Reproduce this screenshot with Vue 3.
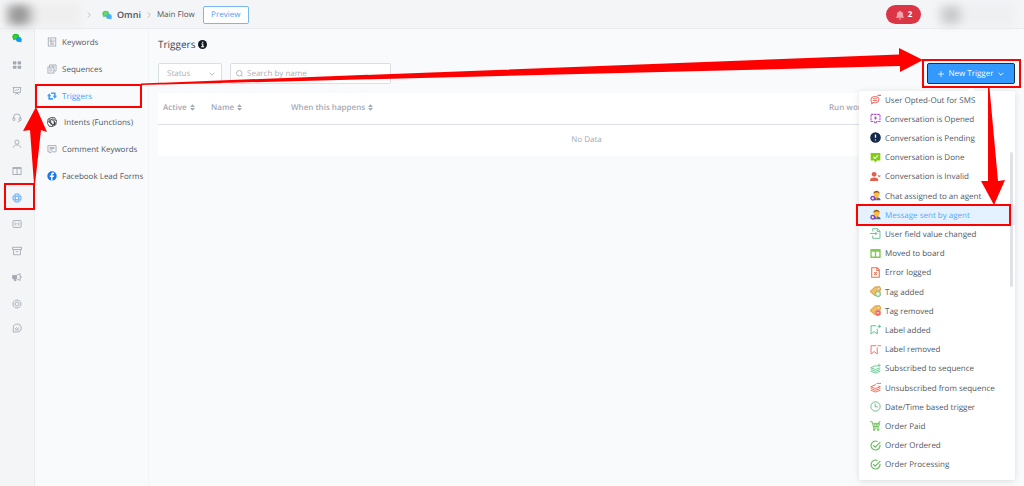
<script setup>
import { ref } from 'vue'

const status = ref('')
const query = ref('')

const chat = '<ellipse cx="6" cy="6" rx="5.5" ry="4.8" fill="#22c32e" stroke="none"/><path d="M2 9v3l3-2z" fill="#22c32e" stroke="none"/><ellipse cx="11" cy="10.5" rx="4.5" ry="4" fill="#1696f0" stroke="none"/><path d="M12 13l3 2.5v-4z" fill="#1696f0" stroke="none"/><path d="M3.5 5h5M3.5 7h4" stroke="#7be082" stroke-width=".8"/>'

const icons = {
  chat,
  grid: '<g fill="currentColor" stroke="none"><rect x="1.5" y="2" width="5.5" height="5" rx="1"/><rect x="9" y="2" width="5.5" height="5" rx="1"/><rect x="1.5" y="9" width="5.5" height="5" rx="1"/><rect x="9" y="9" width="5.5" height="5" rx="1"/></g>',
  board: '<path d="M1 2.500h14M2.500 2.500v8h11v-8M5 14l3-3 3 3M5 8l2-2 1.500 1L11 5"/>',
  headset: '<path d="M2.500 9V7a5.500 5.500 0 0 1 11 0v2M13 11c0 2-1.500 3-4 3"/><rect x="1.500" y="7.500" width="3" height="4.500" rx="1"/><rect x="11.500" y="7.500" width="3" height="4.500" rx="1"/>',
  user: '<circle cx="8" cy="5" r="3.300"/><path d="M2 14c.5-3.500 3-4.500 6-4.500s5.500 1 6 4.500"/>',
  columns: '<rect x="1.500" y="2.500" width="13" height="11"/><path d="M8 2.500v11M1.500 4h13"/>',
  life: '<circle cx="8" cy="8" r="6.600"/><circle cx="8" cy="8" r="3"/><path d="M6 2v3.500M10 2v3.500M6 10.500V14M10 10.500V14M2 6h3.500M2 10h3.500M10.500 6H14M10.500 10H14"/>',
  counter: '<rect x="1.500" y="2.500" width="13" height="11" rx="1"/><path d="M5 5.500v5M11 5.500v5M8 6.500V8M8 9v1"/>',
  archive: '<rect x="1" y="2" width="14" height="3.500"/><path d="M2.500 5.500v8.500h11V5.500M6 9h4"/>',
  megaphone: '<path d="M1 5.500h6v5H5.500l1 3.500H4L3 10.500H1z" fill="currentColor"/><path d="M7 5.500l6-3v11l-6-3zM14.500 6.500v3"/>',
  gear: '<path d="M5.500 1.800h5l1.300 1.700 2.400 1.800v5.400l-2.400 1.800-1.300 1.700h-5l-1.300-1.700-2.400-1.800V5.300l2.400-1.800z"/><circle cx="8" cy="8" r="3.200"/>',
  whats: '<path d="M2 14.500V8a6.300 6.300 0 1 1 6 6.300z"/><path d="M5 9.500l2-2 2 1.500 2-1.500M5 11h6"/>',
  keyword: '<rect x="2" y="1.500" width="12" height="13"/><path d="M5 4.500h3v3H5zM10 5h2M10 7h2M5 9.500h6M5 11.500h6"/>',
  sequence: '<rect x="1.500" y="5" width="9.500" height="9.500"/><path d="M4 5V1.500h10.500V11H11M3.500 8h5M3.500 11h5M7 3.500h5"/>',
  retweet: '<path d="M3.500 8v4.500h6M12.500 8V3.500h-6" stroke-width="2.600"/><path d="M0 8.500L3.500 3.500 7 8.500zM16 7.500L12.500 12.500 9 7.500z" fill="currentColor" stroke="none"/>',
  ai: '<g stroke="#30343a" stroke-width="1.300"><path d="M8 1a3.500 3.500 0 0 1 5.500 2.500A3.500 3.500 0 0 1 14.500 9a3.500 3.500 0 0 1-3 4.500A3.500 3.500 0 0 1 6.500 15 3.500 3.500 0 0 1 2 12 3.500 3.500 0 0 1 1.500 6.500a3.500 3.500 0 0 1 3-4.500A3.500 3.500 0 0 1 8 1z"/><path d="M4.500 2.500v6L9 11.500M4.500 5.500L9.500 2.800l4.500 3M8 4.500l4 2.300V13M14.500 9L9.500 13l-4.500-2.500M11.500 7v5l-3.500 2M1.500 7l4.500 3V5.500"/></g>',
  comment: '<path d="M1.500 2.500h13v10H7L4.500 14.500v-2h-3zM4 5.500h8M4 7.500h8M4 9.500h5"/>',
  facebook: '<circle cx="8" cy="8" r="7.500" fill="#1877f2" stroke="none"/><path d="M8.800 15.500V9.500h2l.4-2.300H8.800V6c0-.9.400-1.400 1.400-1.400h1V2.700C9 2.200 6.500 2.500 6.500 5.500v1.700h-2v2.300h2v6z" fill="#fff" stroke="none"/>',
  optout: '<g stroke="#f2706c" stroke-width="1.500"><path d="M3 12.500C.500 10 .800 5 5 4c4-1 8 .5 8 4 0 4-4.500 5.500-8 4.300L2 14.500zM4 7h6M4 9.500h6M11 2h5"/></g>',
  opened: '<g stroke="#b64bd8" stroke-width="1.500"><path d="M1.500 2h13v10.500H10L8 15l-2-2.500H1.500z" stroke-dasharray="3.500 1"/><path d="M8 5v4.500M5.700 7.200h4.600"/></g>',
  pending: '<circle cx="8" cy="8" r="7.700" fill="#14294b" stroke="none"/><path d="M8 3.500v5M8 10.800v1.700" stroke="#fff" stroke-width="1.900"/>',
  done: '<path d="M1 1.500h14v11h-5L8 15.500 6 12.500H1z" fill="#84cc16" stroke="none"/><path d="M5 7l2.300 2.300L11.500 5" stroke="#fff" stroke-width="1.600"/>',
  invalid: '<g fill="#e3604c" stroke="none"><circle cx="6" cy="4.800" r="3.500"/><path d="M0 14.500C0 10.500 2 9.500 6 9.500s6 1 6 5z"/></g><path d="M12 6l3 3M15 6l-3 3" stroke="#e3604c"/>',
  agent: '<path d="M4 15c0-3 2-4.500 5.500-4.500S15.500 12 15.500 15z" fill="#4a6a9e" stroke="none"/><circle cx="9.500" cy="6" r="4.300" fill="#fbbf45" stroke="none"/><path d="M5 5.500C4.500-.5 14.500-.5 14 5.500 12 3 8 3 5 5.500z" fill="#9a5b20" stroke="none"/><path d="M7.500 10l2 4 2-4z" fill="#f4a13a" stroke="none"/><circle cx="4" cy="12" r="3.600" fill="#7d42c0" stroke="none"/><path d="M4 10.300v3.400M2.300 12h3.400" stroke="#fff"/>',
  field: '<g stroke="#69c290"><path d="M4 5V1h7l3.500 3.500V15H4v-4M10.500 1v4h4M0 8h10M7.500 5.500L10 8l-2.500 2.500"/></g>',
  moved: '<path d="M.5 1.500h15v13H.5z" fill="#83c850" stroke="none"/><path d="M2.500 5.500H7v7H2.500zM9 5.500h4.500v7H9z" fill="#fff" stroke="none"/>',
  error: '<g stroke="#ee6d4b" stroke-width="1.500"><path d="M2.500 1h8l3 3v11h-11zM10 1v4h3.500M6 7.500l4 4M10 7.500l-4 4"/></g>',
  tagAdd: '<path d="M0 8l7-6.500 7-.5 1.500 3-1.500 5-7 5z" fill="#efbd63" stroke="#d59b41"/><circle cx="12.500" cy="3.800" r="1" fill="#fff" stroke="none"/><circle cx="11.500" cy="11.500" r="4" fill="#b9dcb3" stroke="#8abf8e"/><path d="M11.500 9.500v4M9.500 11.500h4" stroke="#fff"/>',
  tagDel: '<path d="M0 8l7-6.500 7-.5 1.500 3-1.500 5-7 5z" fill="#efbd63" stroke="#d59b41"/><circle cx="12.500" cy="3.800" r="1" fill="#fff" stroke="none"/><circle cx="11.500" cy="11.500" r="4" fill="#f1605c" stroke="#ee8d86"/><path d="M9.500 11.500h4" stroke="#fff"/>',
  labelAdd: '<g stroke="#58c68a" stroke-width="1.400"><path d="M9 2.500H1.500v12L6 11l4.500 3.500V7M13.500 1v5M11 3.500h5"/></g>',
  labelDel: '<g stroke="#f27070" stroke-width="1.400"><path d="M9 2.500H1.500v12L6 11l4.500 3.500V5M11 2.500h5"/></g>',
  sub: '<g stroke="#68c993" stroke-width="1.400"><path d="M10 4.500L7.500 4 1 7l7 2.500L15 7M1 9.500L8 12l7-2.500M1 12l7 2.500 7-2.500M13 1v5M10.500 3.500h5"/></g>',
  unsub: '<g stroke="#ef7059" stroke-width="1.400"><path d="M9 4.500L7.500 4 1 7l7 2.500L15 7l-3-1.300M1 9.500L8 12l7-2.500M1 12l7 2.500 7-2.500M9.500 2H16"/></g>',
  clock: '<g stroke="#6cbd85" stroke-width="1.400"><circle cx="8" cy="8" r="6.800"/><path d="M7.500 3.500V8.500H11.500"/></g>',
  cart: '<g stroke="#79c267" stroke-width="1.500"><path d="M0 2.500h3l2.500 9H13M4 5.500l10 0-1.500 4H5.500M7 4v6M10 4v6M8 5l2 2 5-5.500"/><circle cx="6" cy="14" r="1"/><circle cx="12" cy="14" r="1"/></g>',
  order: '<g stroke="#69bd60" stroke-width="1.700"><path d="M14.500 7A6.500 6.500 0 1 1 11 2.200M4.500 7.500l3 3L15 3"/></g>'
}

const rail = ['chat', 'grid', 'board', 'headset', 'user', 'columns', 'life', 'counter', 'archive', 'megaphone', 'gear']

const menu = [
  ['keyword', 'Keywords'],
  ['sequence', 'Sequences'],
  ['retweet', 'Triggers'],
  ['ai', 'Intents (Functions)'],
  ['comment', 'Comment Keywords'],
  ['facebook', 'Facebook Lead Forms']
]

const events = [
  ['optout', 'User Opted-Out for SMS'],
  ['opened', 'Conversation is Opened'],
  ['pending', 'Conversation is Pending'],
  ['done', 'Conversation is Done'],
  ['invalid', 'Conversation is Invalid'],
  ['agent', 'Chat assigned to an agent'],
  ['agent', 'Message sent by agent'],
  ['field', 'User field value changed'],
  ['moved', 'Moved to board'],
  ['error', 'Error logged'],
  ['tagAdd', 'Tag added'],
  ['tagDel', 'Tag removed'],
  ['labelAdd', 'Label added'],
  ['labelDel', 'Label removed'],
  ['sub', 'Subscribed to sequence'],
  ['unsub', 'Unsubscribed from sequence'],
  ['clock', 'Date/Time based trigger'],
  ['cart', 'Order Paid'],
  ['order', 'Order Ordered'],
  ['order', 'Order Processing']
]
</script>

<template>
  <div class="page">
    <header class="top">
      <span class="blur account"></span>
      <svg class="sep" viewBox="0 0 6 10"><path d="M1 1l4 4-4 4" /></svg>
      <svg class="icon brand" viewBox="0 0 16 16" v-html="icons.chat"></svg>
      <strong class="name">Omni</strong>
      <svg class="sep" viewBox="0 0 6 10"><path d="M1 1l4 4-4 4" /></svg>
      <span class="flow">Main Flow</span>
      <button class="preview">Preview</button>
      <button class="alerts" aria-label="2 notifications">
        <svg viewBox="0 0 16 16"><path d="M7 1h2v1.500c3 .5 4 2.500 4 5V10l2 2.500H1L3 10V7.500c0-2.500 1-4.500 4-5zM6 13.500h4c0 2.500-4 2.500-4 0z" /></svg>
        2
      </button>
      <span class="blur profile"></span>
    </header>

    <div class="body">
      <nav class="rail" aria-label="Sections">
        <div class="rail-list">
          <button v-for="r in rail" :key="r" :aria-label="r" :class="{ active: r === 'life' }">
            <svg class="icon" viewBox="0 0 16 16" v-html="icons[r]"></svg>
          </button>
        </div>
        <button class="last" aria-label="whatsapp">
          <svg class="icon" viewBox="0 0 16 16" v-html="icons.whats"></svg>
        </button>
      </nav>

      <nav class="side" aria-label="Automation">
        <div class="side-list">
          <a v-for="m in menu" :key="m[1]" href="#" :class="['link', m[0], { active: m[1] === 'Triggers' }]">
            <svg class="icon" viewBox="0 0 16 16" v-html="icons[m[0]]"></svg>
            <span>{{ m[1] }}</span>
          </a>
        </div>
      </nav>

      <main class="main">
        <h1>
          Triggers
          <svg viewBox="0 0 16 16"><circle cx="8" cy="8" r="8" /><path d="M6 7h2.500v5M5.500 12h5.500M7 4h2.500" /></svg>
        </h1>
        <div class="tools">
          <div class="field status">
            <select v-model="status" aria-label="Status">
              <option value="">Status</option>
            </select>
            <svg class="chev" viewBox="0 0 10 6"><path d="M1 1l4 4 4-4" /></svg>
          </div>
          <label class="field search">
            <svg class="lens" viewBox="0 0 16 16"><circle cx="7.500" cy="7.500" r="6.300" /><path d="M12 12l3 3" /></svg>
            <input v-model="query" type="text" placeholder="Search by name" aria-label="Search by name" />
          </label>
          <div class="create">
            <button class="new">
              <svg class="plus" viewBox="0 0 8 8"><path d="M4 0v8M0 4h8" /></svg>
              New Trigger
              <svg class="chev" viewBox="0 0 10 6"><path d="M1 1l4 4 4-4" /></svg>
            </button>
            <div class="drop">
              <ul>
                <li v-for="(e, i) in events" :key="i">
                  <button :class="{ active: i === 6 }">
                    <svg class="icon" viewBox="0 0 16 16" v-html="icons[e[0]]"></svg>
                    {{ e[1] }}
                  </button>
                </li>
              </ul>
              <span class="thumb"></span>
            </div>
          </div>
        </div>

        <table>
          <colgroup><col class="c1" /><col class="c2" /><col /><col class="c4" /></colgroup>
          <thead>
            <tr>
              <th v-for="h in ['Active', 'Name', 'When this happens']" :key="h">
                {{ h }}
                <svg class="sort" viewBox="0 0 6 8"><path d="M3 0l3 3.400H0zM3 8L0 4.600h6z" /></svg>
              </th>
              <th>Run workflow</th>
            </tr>
          </thead>
          <tbody>
            <tr><td colspan="4">No Data</td></tr>
          </tbody>
        </table>
      </main>
    </div>

    <svg class="marks" width="1024" height="486" viewBox="0 0 1024 486" aria-hidden="true">
      <g class="boxes">
        <rect x="5" y="184" width="29" height="25" />
        <rect x="36" y="85" width="105" height="22" />
        <rect x="923" y="60" width="97" height="27" />
        <rect x="857" y="205" width="153" height="20" />
      </g>
      <path d="M34 184L30 130 23 131 36 107 47 132 41 130 35 184z" />
      <path d="M141 83.500L899 54.500V48L923 60 900 72V66L141 85z" />
      <path d="M988 88L988 181H981L994 205 1005 180 998 181 989.500 88z" />
    </svg>
  </div>
</template>

<style>
body {
  background: #f9fafc;
}
</style>

<style scoped>
.page {
  position: relative;
  min-height: 100vh;
  display: flex;
  flex-direction: column;
  overflow: hidden;
  background: #f9fafc;
  font-family: "Open Sans", "Noto Sans", sans-serif;
  font-size: 8px;
  line-height: 12px;
  text-rendering: geometricPrecision;
  color: #515862;
}
.page * { box-sizing: border-box; }
button, input, select {
  font: inherit;
  color: inherit;
  text-rendering: inherit;
  background: none;
  border: 0;
  padding: 0;
  margin: 0;
}
svg {
  fill: none;
  stroke: currentColor;
  flex: none;
}
.icon { width: 10px; height: 10px; stroke-width: 1.4; }
.top {
  height: 29px;
  display: flex;
  align-items: center;
  padding-top: 1px;
  background: #f4f5f7;
  border-bottom: 1px solid #e9ebee;
}
.blur { filter: blur(3px); }
.account {
  width: 76px;
  height: 24px;
  margin-left: 4px;
  margin-right: 7px;
  background: radial-gradient(circle at 15px 12px, #999 5px, #cfcfcf 13px, transparent 20px), #efefef;
}
.sep { width: 4px; height: 8px; color: #a4a9b0; }
.brand { margin-left: 11px; opacity: .75; }
.name { font-size: 9px; font-weight: 600; margin: 0 6px 0 5px; color: #4d535c; }
.flow { margin: 0 8px 0 6px; }
.preview {
  width: 46px;
  height: 18px;
  border: 1px solid #79b7f4;
  border-radius: 2px;
  background: #fff;
  color: #4aa0f5;
}
.alerts {
  display: flex;
  align-items: center;
  justify-content: center;
  gap: 3px;
  width: 35px;
  height: 19px;
  margin-left: auto;
  border-radius: 10px;
  background: #dc3545;
  color: #fff;
  font-weight: 700;
}
.alerts svg { width: 10px; height: 10px; fill: #f2a5ac; stroke: none; }
.profile {
  width: 78px;
  height: 24px;
  margin: 0 10px 0 15px;
  background: radial-gradient(circle at 15px 12px, #c6c8c8 3px, #dedfe0 10px, transparent 16px), #eff0f1;
}
.body { flex: 1; display: flex; }
.rail {
  width: 35px;
  display: flex;
  flex-direction: column;
  align-items: center;
  gap: 6px;
  background: #f4f5f7;
  border-right: 1px solid #e9ebee;
  color: #a3a9b2;
}
.rail-list {
  height: 284px;
  display: flex;
  flex-direction: column;
  justify-content: space-between;
}
.rail button { height: 18px; display: flex; align-items: center; }
.rail .active { color: #58a6f8; }
.side { width: 114px; padding-top: 1px; border-right: 1px solid #f3f4f6; }
.side-list { display: grid; height: 160px; grid-auto-rows: 1fr; }
.link {
  display: flex;
  align-items: center;
  gap: 5px;
  padding-left: 12px;
  color: #515862;
  text-decoration: none;
}
.link .icon { color: #a3a9b2; margin-bottom: 2px; }
.link.active, .link.active .icon { color: #409eff; }
.link.ai span { padding-left: 2px; }
.main {
  flex: 1;
  min-width: 0;
  padding: 8px 9px;
}
h1 {
  display: flex;
  align-items: center;
  gap: 3px;
  margin: 0 0 12px;
  font-size: 10px;
  line-height: 14px;
  font-weight: 400;
  color: #3f454e;
}
h1 svg { width: 9px; height: 9px; stroke: #fff; stroke-width: 2; }
h1 circle { fill: #111820; stroke: none; }
.tools { display: flex; gap: 8px; margin-bottom: 9px; }
.field {
  height: 21px;
  display: flex;
  align-items: center;
  border: 1px solid #dadee5;
  border-radius: 2px;
  background: #fff;
  color: #a9afb9;
}
.status { width: 64px; padding: 0 6px 0 8px; }
.status select { appearance: none; flex: 1; min-width: 0; outline: 0; }
.search { width: 161px; padding: 0 5px; gap: 4px; }
.search input { flex: 1; min-width: 0; outline: 0; }
.search input::placeholder { color: #a9afb9; opacity: 1; }
.lens { width: 7px; height: 7px; stroke-width: 2; }
.chev { width: 6px; height: 4px; stroke-width: 1.5; }
.create { position: relative; margin-left: auto; }
.new {
  width: 88px;
  height: 21px;
  display: flex;
  align-items: center;
  justify-content: center;
  gap: 5px;
  border: 1px solid #17314d;
  border-radius: 2px;
  background: #3399ff;
  color: #fff;
}
.plus { width: 6px; height: 6px; }
.drop {
  position: absolute;
  top: 28px;
  right: 0;
  width: 156px;
  padding-bottom: 5px;
  border-radius: 2px;
  background: #fff;
  box-shadow: 0 1px 6px rgba(0, 0, 0, .12);
  z-index: 2;
}
.drop::before {
  content: "";
  position: absolute;
  top: -3px;
  right: 41px;
  width: 6px;
  height: 6px;
  background: #fff;
  transform: rotate(45deg);
}
.drop ul {
  display: grid;
  height: 384px;
  grid-auto-rows: 1fr;
  margin: 0;
  padding: 0;
  list-style: none;
}
.drop li { display: flex; }
.drop li button {
  flex: 1;
  display: flex;
  align-items: center;
  gap: 4px;
  padding-left: 11px;
  text-align: left;
}
.drop .icon { width: 11px; height: 11px; margin-bottom: 2px; }
.drop li .active { background: #e4f2ff; color: #54a8fb; }
.thumb {
  position: absolute;
  top: 61px;
  right: 2px;
  width: 3px;
  height: 135px;
  border-radius: 2px;
  background: #dfe3e9;
}
table {
  width: 100%;
  table-layout: fixed;
  border-collapse: collapse;
  background: #fff;
  color: #a3a9b3;
}
.c1 { width: 48px; }
.c2 { width: 80px; }
.c4 { width: 191px; }
th {
  height: 31px;
  padding: 0 0 0 5px;
  text-align: left;
  white-space: nowrap;
  font-weight: 600;
  border-bottom: 1px solid #dcdfe5;
}
.sort { width: 5px; height: 7px; margin-left: 1px; vertical-align: text-bottom; margin-bottom: 2px; fill: currentColor; stroke: none; }
td { height: 32px; padding: 0; text-align: center; }
.marks {
  position: absolute;
  top: 0;
  left: 0;
  z-index: 3;
  pointer-events: none;
  fill: #f00;
  stroke: none;
}
.boxes { fill: none; stroke: #f00; stroke-width: 2; }
</style>
